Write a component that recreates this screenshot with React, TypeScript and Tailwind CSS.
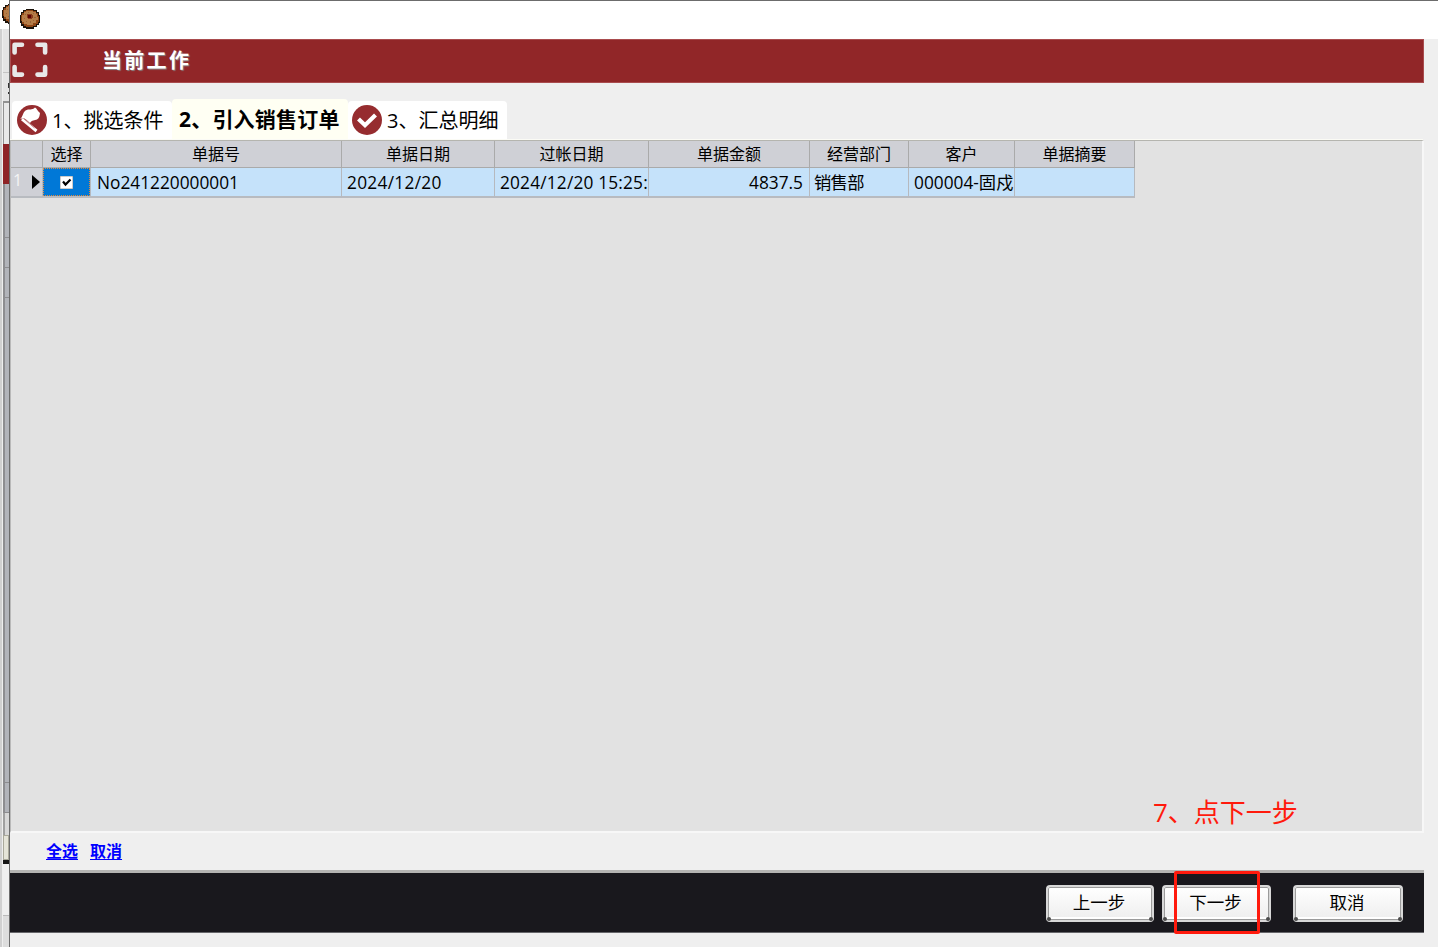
import type { ReactNode } from "react";

const columns = [
  { title: "", value: "", width: "w-[32px]", pad: "" },
  { title: "选择", value: "", width: "w-[48px]", pad: "" },
  { title: "单据号", value: "No241220000001", width: "w-[251px]", pad: "pl-[6px]" },
  { title: "单据日期", value: "2024/12/20", width: "w-[153px]", pad: "pl-[5px] tracking-[0.300px]" },
  { title: "过帐日期", value: "2024/12/20 15:25:", width: "w-[154px]", pad: "pl-[5px] tracking-[0.180px]" },
  { title: "单据金额", value: "4837.5", width: "w-[161px]", pad: "justify-end pr-[6px]" },
  { title: "经营部门", value: "销售部", width: "w-[99px]", pad: "pl-[4px] tracking-[-0.700px]" },
  { title: "客户", value: "000004-固戍", width: "w-[106px]", pad: "pl-[5px]" },
  { title: "单据摘要", value: "", width: "w-[120px]", pad: "" },
];

function Cookie() {
  return (
    <svg width="20" height="20" viewBox="0 0 20 20" shapeRendering="crispEdges" className="shrink-0">
      <path d="M6 0h8v1h3v2h2v3h1v8h-1v2h-2v2h-3v2H6v-1H3v-2H1v-3H0V6h1V3h2V1h3z" fill="#1b120a" />
      <path d="M6 1h7v1h3v2h2v3h1v6h-1v2h-2v2h-3v1H6v-1H4v-2H2v-3H1V6h1V4h2V2h2z" fill="#8f4515" />
      <path d="M6 2h7v1h3v2h1v3h1v3h-2v3h-3v2H7v-1H4v-2H2V6h2V3h2z" fill="#b57d48" />
      <path d="M5 5h1v1H5zM8 3h1v1H8zM13 4h1v1h-1zM4 9h1v1H4zM14 8h2v1h-2zM6 12h1v1H6zM10 12h1v2h-1zM13 11h1v1h-1z" fill="#986238" />
      <path d="M7 5h5v1h1v3h-1v1H8V9H7z" fill="#8a3a1b" />
      <path d="M8 6h3v3H8z" fill="#5a0505" />
    </svg>
  );
}

function FlagIcon() {
  return (
    <svg width="30" height="30" viewBox="0 0 30 30" className="shrink-0">
      <circle cx="15" cy="15" r="15" fill="#962c2f" />
      <path d="M3 14C6 12 5.500 8 8.500 5.500c3.500-2 6.500 0 9.500-3 2 1 2.500 3.500 5 5.500-.5 3-.5 5-3 6.500-2.500 1-5 .5-7 3.500L9 14.500l-2.500-1.500z" fill="#fff" />
      <path d="M5 14l14.500 12" stroke="#fff" strokeWidth="3" />
      <path d="M6.500 13.500L17.500 23" stroke="#b76a6c" strokeWidth=".8" />
    </svg>
  );
}

function CheckIcon() {
  return (
    <svg width="30" height="30" viewBox="0 0 30 30" className="shrink-0">
      <circle cx="15" cy="15" r="15" fill="#962c2f" />
      <path d="M6.500 14l6.500 6.200L23.500 10" fill="none" stroke="#fff" strokeWidth="4.200" />
    </svg>
  );
}

function FooterButton({ children, className }: { children: ReactNode; className: string }) {
  return (
    <button
      className={`relative flex h-[37px] items-center justify-center rounded-[4px] border-2 border-[#d8d8d8] bg-gradient-to-b from-white to-[#eeeeee] pb-[3px] pr-[2px] text-[17.500px] text-black shadow-[inset_0_0_0_1px_#9b9b9b,inset_0_-2px_0_1px_#fff] ${className}`}
    >
      {children}
      <span className="absolute -bottom-px -left-px size-[4px] rounded-full bg-[#4b4b4b]" />
      <span className="absolute -bottom-px -right-px size-[4px] rounded-full bg-[#4b4b4b]" />
    </button>
  );
}

function BackgroundWindow() {
  return (
    <div className="flex h-[947px] w-[9px] shrink-0 flex-col overflow-hidden">
      <div className="h-[29px] bg-white pl-[2px] pt-[4px]"><Cookie /></div>
      <div className="flex h-[918px] bg-[#c7c7c7]">
        <div className="w-[2px] bg-[#d0d0d0]" />
        <div className="w-[1px] bg-[#eeeeee]" />
        <div className="flex w-[6px] flex-col">
          <div className="h-[44px] border-b border-[#c4c4c4] bg-[#e4e4e4]" />
          <div className="flex h-[28px] flex-col items-end gap-[4px] bg-[#e5e5e5] pt-[10px]">
            <div className="h-[5px] w-px bg-[#333333]" />
            <div className="h-[2px] w-px bg-[#333333]" />
          </div>
          <div className="h-[43px] border-l border-t-2 border-[#929292] bg-[#e9e9e9]" />
          <div className="h-[40px] bg-[#8e2326]" />
          <div className="h-[54px] border-b border-l-2 border-[#8d8d90] bg-[#b2b4ba]" />
          <div className="h-[30px] border-b border-l-2 border-[#8d8d90] bg-[#b2b4ba]" />
          <div className="h-[30px] border-b border-l-2 border-[#8d8d90] bg-[#b2b4ba]" />
          <div className="h-[485px] border-b border-l-2 border-[#8d8d90] bg-[#b2b4ba]" />
          <div className="h-[30px] border-b border-l-2 border-[#8d8d90] bg-[#b2b4ba]" />
          <div className="h-[22px] border-l-2 border-[#a0a0a0] bg-[#d8d8d8]" />
          <div className="h-[25px] border border-[#aaa99b] bg-[#e5e4d8]" />
          <div className="h-[4px] bg-[#151515]" />
          <div className="h-[52px] border-b border-[#bbbbbb] bg-[#efefef]" />
          <div className="flex-1 bg-[#dddddd]" />
        </div>
      </div>
    </div>
  );
}

export default function App() {
  return (
    <div className="relative flex h-[947px] w-[1438px] overflow-hidden bg-[#efefef] font-['Open_Sans','Noto_Sans_CJK_SC',sans-serif] text-black">
      <BackgroundWindow />
      <main className="flex min-w-0 flex-1 flex-col border-l border-t border-[#6c6c6c]">
        <div className="flex h-[38px] shrink-0 items-center bg-white pb-[3px] pl-[10px]"><Cookie /></div>
        <header className="flex h-[44px] w-[1414px] shrink-0 items-center border border-[#a94c4e] bg-[#912628]">
          <svg width="38" height="38" viewBox="0 0 38 38" className="-mt-[3px] shrink-0" fill="none" stroke="#e8e8e8" strokeWidth="4.600" strokeLinecap="round" strokeLinejoin="round">
            <path d="M3.600 11.500V3.800H11M26.500 3.800h7.600V11.500M3.600 26v7.600H11M26.500 33.600h7.600V26" />
          </svg>
          <h1 className="ml-[53px] text-[20px] font-bold leading-[30px] tracking-[2.300px] text-white [text-shadow:1px_1px_1px_#888]">当前工作</h1>
        </header>

        <nav className="flex h-[57px] w-[1413px] shrink-0 items-end border-b border-[#fbfbf5] pl-[2px]">
          <div className="flex h-[38px] w-[160px] items-center rounded-t-[4px] bg-white pl-[5px] text-[20px]">
            <FlagIcon /><span className="ml-[5px] whitespace-nowrap pt-[2px]">1、挑选条件</span>
          </div>
          <div className="flex h-[40px] w-[176px] items-center rounded-t-[4px] bg-[#fffff3] pl-[7px] text-[21px] font-bold">
            <span className="whitespace-nowrap pt-[1px] tracking-[0.200px]">2、引入销售订单</span>
          </div>
          <div className="flex h-[38px] w-[159px] items-center rounded-t-[4px] bg-white pl-[4px] text-[20px]">
            <CheckIcon /><span className="ml-[5px] whitespace-nowrap pt-[2px]">3、汇总明细</span>
          </div>
        </nav>

        <section className="flex h-[693px] w-[1414px] shrink-0 flex-col border-b-2 border-l border-r-2 border-t border-b-[#f7f7f7] border-l-[#b9b9b9] border-r-[#f7f7f7] border-t-[#b5b5af] bg-[#e2e2e2]">
          <div className="flex h-[27px] shrink-0">
            {columns.map((c, i) => (
              <div key={i} className={`flex h-[27px] shrink-0 items-center justify-center border-b border-r border-[#aaaaaa] bg-[#cfd0d6] pb-[1px] text-[16px] leading-none ${c.width}`}>{c.title}</div>
            ))}
          </div>
          <div className="flex h-[30px] shrink-0">
            {columns.map((c, i) => (
              <div key={i} className={`flex h-[30px] shrink-0 items-center overflow-hidden whitespace-nowrap border-b-2 border-r border-b-[#b8bbc0] border-r-[#b6b9be] text-[17.300px] leading-none ${i === 0 ? "bg-[#cfd0d6]" : "bg-[#c5e2fa]"} ${c.width} ${c.pad}`}>
                {i === 0 ? (
                  <>
                    <span className="ml-[2px] w-[10px] pb-[4px] text-[16px] text-[#f4f4f4]">1</span>
                    <svg width="8" height="14" viewBox="0 0 8 14" className="ml-[9px]"><path d="M0 0l8 7-8 7z" fill="#000" /></svg>
                  </>
                ) : i === 1 ? (
                  <div className="flex h-[28px] w-[47px] items-center justify-center border border-dotted border-[#e28b3d] bg-[#0078d7]">
                    <svg width="13" height="13" viewBox="0 0 13 13">
                      <path d="M0 0h13v13H0z" fill="#fff" stroke="#999" />
                      <path d="M3 5.500l2.500 3 5-5" fill="none" stroke="#000" strokeWidth="2.200" />
                    </svg>
                  </div>
                ) : <span className="pt-[1px]">{c.value}</span>}
              </div>
            ))}
          </div>
        </section>

        <div className="flex h-[37px] w-[1414px] shrink-0 items-center gap-[12px] pb-[2px] pl-[36px] text-[16px] font-bold leading-[20px] text-[#0000ff]">
          <a className="underline underline-offset-2">全选</a>
          <a className="underline underline-offset-2">取消</a>
        </div>

        <footer className="flex h-[63px] w-[1414px] shrink-0 items-start border-b border-t-[3px] border-b-[#66666a] border-t-[#b4b4b2] bg-[#19181d] pl-[1036px] pt-[12px]">
          <FooterButton className="w-[108px]">上一步</FooterButton>
          <FooterButton className="ml-[8px] w-[109px]">下一步</FooterButton>
          <FooterButton className="ml-[22px] w-[110px]">取消</FooterButton>
        </footer>
      </main>

      <div className="absolute left-[1153px] top-[794px] whitespace-nowrap text-[26px] leading-[36px] text-[#ff1a0d]">7、点下一步</div>
      <div className="absolute left-[1174px] top-[871px] h-[63px] w-[86px] rounded-[2px] border-[3px] border-[#ff1a0d]" />
    </div>
  );
}
